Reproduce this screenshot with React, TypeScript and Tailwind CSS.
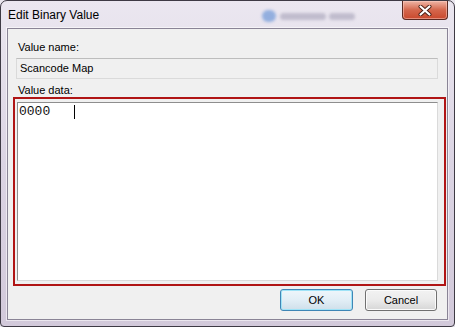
import React from "react";

const sans = { fontFamily: '"Liberation Sans", Arial, sans-serif' };

function CloseGlyph() {
  return (
    <svg width="14" height="11" viewBox="0 0 14 11">
      <path d="M2.5 1.5 L11.5 9.5 M11.5 1.5 L2.5 9.5" stroke="#4a1e14" strokeWidth="4" strokeLinecap="round" fill="none" />
      <path d="M2.5 1.5 L11.5 9.5 M11.5 1.5 L2.5 9.5" stroke="#ffffff" strokeWidth="2.2" strokeLinecap="round" fill="none" />
    </svg>
  );
}

export default function App() {
  return (
    <div className="w-[455px] h-[327px] bg-[#e9e6ee]" style={sans}>
      <div className="relative flex flex-col w-full h-full rounded-t-[7px] rounded-b-[4px] border border-[#3e3a44] bg-gradient-to-b from-[#ebe7f0] via-[#dbd4e3] to-[#d2c9da] overflow-hidden">
        {/* blurred glass background */}
        <div className="absolute left-[261px] top-[9px] w-[14px] h-[12px] rounded-full bg-[#6e98d8] opacity-70 blur-[1.5px]" />
        <div className="absolute left-[279px] top-[12px] flex gap-[3px] opacity-45 blur-[1.5px]">
          <div className="h-[7px] w-[46px] rounded-sm bg-[#8f8ca6]" />
          <div className="h-[7px] w-[26px] rounded-sm bg-[#8f8ca6]" />
        </div>
        {/* title bar */}
        <div className="relative flex h-[27px] items-start">
          <div className="pl-[7px] pt-[7px] text-[12px] leading-[15px] text-black">Edit Binary Value</div>
          <div className="ml-auto mr-[6px] flex h-[19px] w-[46px] items-center justify-center rounded-b-[4px] border border-t-0 border-[#5b2a22] bg-gradient-to-b from-[#eeb5a6] via-[#d4664c] to-[#c9482c] shadow-[inset_0_0_0_1px_rgba(255,210,200,0.5)]">
            <CloseGlyph />
          </div>
        </div>
        {/* client area */}
        <div className="relative mx-[6px] mb-[6px] flex-1 border border-[#8a8496] bg-[#f0f0f0] flex flex-col shadow-[0_0_0_1px_rgba(255,255,255,0.55)]">
          <div className="pl-[10px] pt-[11px] text-[11px] leading-[15px] text-black">Value name:</div>
          <div className="ml-[8px] mt-[3px] flex h-[21px] w-[422px] items-center border border-[#dadada] border-t-[#bdbdbd] bg-[#f0f0f0] pl-[3px] text-[11px] text-black">
            Scancode Map
          </div>
          <div className="pl-[10px] mt-[4px] text-[11px] leading-[14px] text-black">Value data:</div>
          <div className="ml-[5px] h-[189px] w-[433px] border-2 border-[#b01515] pl-[2px] pt-[3px]">
            <div className="h-[179px] w-[421px] border border-[#8e8e8e] border-r-[#dadada] border-b-[#dadada] bg-white pl-[1px] pt-[1px]">
              <div className="flex items-start whitespace-pre text-[13px] leading-[15px] text-[#111]" style={{ fontFamily: '"Liberation Mono", "Courier New", monospace' }}>
                <span>{"0000   "}</span>
                <span className="mt-[1px] inline-block h-[14px] w-px bg-black" />
              </div>
            </div>
          </div>
          <div className="mt-[3px] flex justify-end gap-[12px] pr-[10px]">
            <div className="flex h-[22px] w-[73px] items-center justify-center rounded-[3px] border border-[#3f86b5] bg-gradient-to-b from-[#eef6fb] via-[#e2eef6] to-[#cfdfea] shadow-[inset_0_0_0_1px_#9fe3f7] text-[11px] text-black">
              OK
            </div>
            <div className="flex h-[22px] w-[72px] items-center justify-center rounded-[3px] border border-[#707070] bg-gradient-to-b from-[#f2f2f2] via-[#ebebeb] to-[#d6d6d6] shadow-[inset_0_0_0_1px_#fbfbfb] text-[11px] text-black">
              Cancel
            </div>
          </div>
        </div>
      </div>
    </div>
  );
}
